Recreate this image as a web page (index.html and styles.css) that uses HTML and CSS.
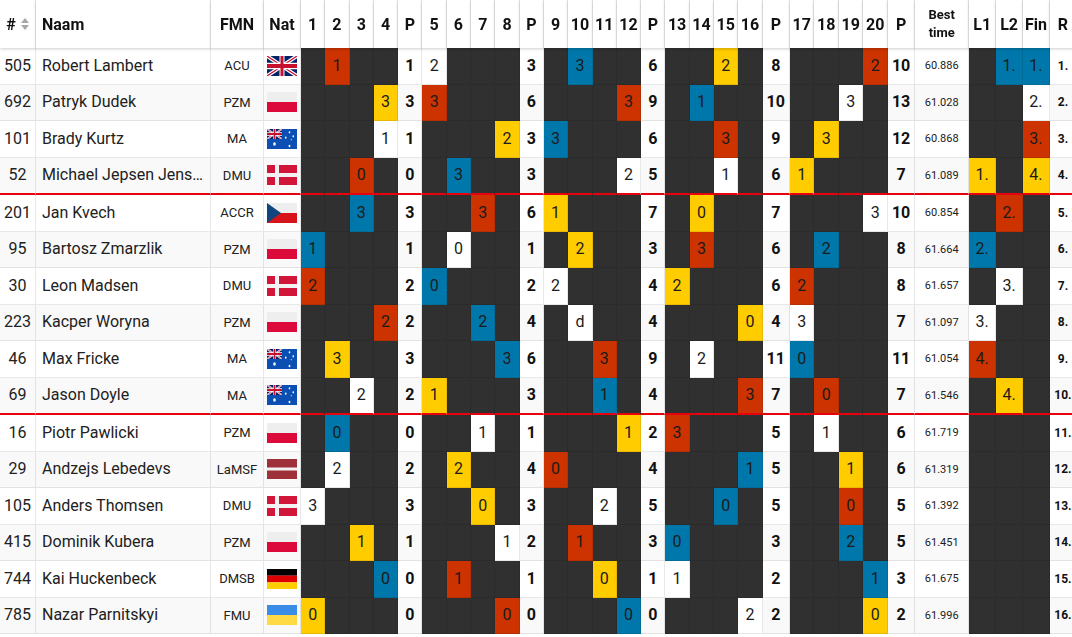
FILE: index.html
```html
<!DOCTYPE html>
<html lang="nl">
<head>
<meta charset="utf-8">
<title>Uitslag</title>
<link rel="stylesheet" href="styles.css">
</head>
<body>
<svg class="defs" aria-hidden="true">
  <symbol id="gb" viewBox="0 0 60 30" preserveAspectRatio="none">
    <rect width="60" height="30" fill="#012169"/>
    <path d="M0,0 L60,30 M60,0 L0,30" stroke="#fff" stroke-width="6"/>
    <path d="M0,0 L60,30 M60,0 L0,30" stroke="#c8102e" stroke-width="2"/>
    <path d="M30,0 V30 M0,15 H60" stroke="#fff" stroke-width="10"/>
    <path d="M30,0 V30 M0,15 H60" stroke="#c8102e" stroke-width="6"/>
  </symbol>
  <symbol id="pl" viewBox="0 0 30 20" preserveAspectRatio="none">
    <rect width="30" height="10" fill="#eeeeee"/>
    <rect y="10" width="30" height="10" fill="#dc0a3a"/>
  </symbol>
  <symbol id="au" viewBox="0 0 60 30" preserveAspectRatio="none">
    <rect width="60" height="30" fill="#0b4fb3"/>
    <use href="#gb" width="30" height="15"/>
    <circle cx="15" cy="22.5" r="2.6" fill="#fff"/>
    <circle cx="45" cy="25.5" r="1.8" fill="#fff"/>
    <circle cx="37.5" cy="13" r="1.6" fill="#fff"/>
    <circle cx="45" cy="5" r="1.6" fill="#fff"/>
    <circle cx="52.5" cy="11" r="1.6" fill="#fff"/>
    <circle cx="48.5" cy="16" r="1" fill="#fff"/>
  </symbol>
  <symbol id="dk" viewBox="0 0 30 20" preserveAspectRatio="none">
    <rect width="30" height="20" fill="#d2163a"/>
    <rect x="8" width="4" height="20" fill="#f2f2f2"/>
    <rect y="8" width="30" height="4" fill="#f2f2f2"/>
  </symbol>
  <symbol id="cz" viewBox="0 0 30 20" preserveAspectRatio="none">
    <rect width="30" height="10" fill="#eeeeee"/>
    <rect y="10" width="30" height="10" fill="#d7141a"/>
    <polygon points="0,0 14,10 0,20" fill="#11457e"/>
  </symbol>
  <symbol id="lv" viewBox="0 0 30 20" preserveAspectRatio="none">
    <rect width="30" height="20" fill="#9e3039"/>
    <rect y="8.5" width="30" height="3" fill="#f2f2f2"/>
  </symbol>
  <symbol id="de" viewBox="0 0 30 20" preserveAspectRatio="none">
    <rect width="30" height="6.7" fill="#000"/>
    <rect y="6.6" width="30" height="6.8" fill="#dd0000"/>
    <rect y="13.3" width="30" height="6.7" fill="#ffce00"/>
  </symbol>
  <symbol id="ua" viewBox="0 0 30 20" preserveAspectRatio="none">
    <rect width="30" height="10" fill="#3a8de6"/>
    <rect y="10" width="30" height="10" fill="#ffda44"/>
  </symbol>
</svg>

<table class="results">
  <colgroup>
    <col class="c-no"><col class="c-name"><col class="c-fmn"><col class="c-nat">
    <col class="c-h"><col class="c-h"><col class="c-h"><col class="c-h"><col class="c-h">
    <col class="c-h"><col class="c-h"><col class="c-h"><col class="c-h"><col class="c-h">
    <col class="c-h"><col class="c-h"><col class="c-h"><col class="c-h"><col class="c-h">
    <col class="c-h"><col class="c-h"><col class="c-h"><col class="c-h">
    <col class="c-pw">
    <col class="c-h2"><col class="c-h2"><col class="c-h2"><col class="c-h2">
    <col class="c-pw">
    <col class="c-best"><col class="c-l"><col class="c-l"><col class="c-l"><col class="c-rk">
  </colgroup>
  <thead>
    <tr>
      <th class="hno"><span class="hno-in">#<svg class="sort" viewBox="0 0 8 12"><polygon points="0,5 4,0 8,5" /><polygon points="0,7 8,7 4,12" /></svg></span></th>
      <th class="hname">Naam</th>
      <th>FMN</th>
      <th>Nat</th>
      <th>1</th><th>2</th><th>3</th><th>4</th><th>P</th>
      <th>5</th><th>6</th><th>7</th><th>8</th><th>P</th>
      <th>9</th><th>10</th><th>11</th><th>12</th><th>P</th>
      <th>13</th><th>14</th><th>15</th><th>16</th><th>P</th>
      <th>17</th><th>18</th><th>19</th><th>20</th><th>P</th>
      <th class="hbest">Best<br>time</th>
      <th>L1</th><th>L2</th><th>Fin</th><th>R</th>
    </tr>
  </thead>
  <tbody>
    <tr>
      <td class="no">505</td><td class="name">Robert Lambert</td><td class="fmn">ACU</td>
      <td class="nat"><svg class="flag" viewBox="0 0 30 20"><use href="#gb" width="30" height="20"/></svg></td>
      <td class="x"></td><td class="r">1</td><td class="x"></td><td class="x"></td><td class="p">1</td>
      <td class="w">2</td><td class="x"></td><td class="x"></td><td class="x"></td><td class="p">3</td>
      <td class="x"></td><td class="b">3</td><td class="x"></td><td class="x"></td><td class="p">6</td>
      <td class="x"></td><td class="x"></td><td class="y">2</td><td class="x"></td><td class="p">8</td>
      <td class="x"></td><td class="x"></td><td class="x"></td><td class="r">2</td><td class="p">10</td>
      <td class="bt">60.886</td><td class="x"></td><td class="b">1.</td><td class="b">1.</td><td class="rk">1.</td>
    </tr>
    <tr>
      <td class="no">692</td><td class="name">Patryk Dudek</td><td class="fmn">PZM</td>
      <td class="nat"><svg class="flag" viewBox="0 0 30 20"><use href="#pl" width="30" height="20"/></svg></td>
      <td class="x"></td><td class="x"></td><td class="x"></td><td class="y">3</td><td class="p">3</td>
      <td class="r">3</td><td class="x"></td><td class="x"></td><td class="x"></td><td class="p">6</td>
      <td class="x"></td><td class="x"></td><td class="x"></td><td class="r">3</td><td class="p">9</td>
      <td class="x"></td><td class="b">1</td><td class="x"></td><td class="x"></td><td class="p">10</td>
      <td class="x"></td><td class="x"></td><td class="w">3</td><td class="x"></td><td class="p">13</td>
      <td class="bt">61.028</td><td class="x"></td><td class="x"></td><td class="w">2.</td><td class="rk">2.</td>
    </tr>
    <tr>
      <td class="no">101</td><td class="name">Brady Kurtz</td><td class="fmn">MA</td>
      <td class="nat"><svg class="flag" viewBox="0 0 30 20"><use href="#au" width="30" height="20"/></svg></td>
      <td class="x"></td><td class="x"></td><td class="x"></td><td class="w">1</td><td class="p">1</td>
      <td class="x"></td><td class="x"></td><td class="x"></td><td class="y">2</td><td class="p">3</td>
      <td class="b">3</td><td class="x"></td><td class="x"></td><td class="x"></td><td class="p">6</td>
      <td class="x"></td><td class="x"></td><td class="r">3</td><td class="x"></td><td class="p">9</td>
      <td class="x"></td><td class="y">3</td><td class="x"></td><td class="x"></td><td class="p">12</td>
      <td class="bt">60.868</td><td class="x"></td><td class="x"></td><td class="r">3.</td><td class="rk">3.</td>
    </tr>
    <tr class="sep">
      <td class="no">52</td><td class="name">Michael Jepsen Jensen</td><td class="fmn">DMU</td>
      <td class="nat"><svg class="flag" viewBox="0 0 30 20"><use href="#dk" width="30" height="20"/></svg></td>
      <td class="x"></td><td class="x"></td><td class="r">0</td><td class="x"></td><td class="p">0</td>
      <td class="x"></td><td class="b">3</td><td class="x"></td><td class="x"></td><td class="p">3</td>
      <td class="x"></td><td class="x"></td><td class="x"></td><td class="w">2</td><td class="p">5</td>
      <td class="x"></td><td class="x"></td><td class="w">1</td><td class="x"></td><td class="p">6</td>
      <td class="y">1</td><td class="x"></td><td class="x"></td><td class="x"></td><td class="p">7</td>
      <td class="bt">61.089</td><td class="y">1.</td><td class="x"></td><td class="y">4.</td><td class="rk">4.</td>
    </tr>
    <tr>
      <td class="no">201</td><td class="name">Jan Kvech</td><td class="fmn">ACCR</td>
      <td class="nat"><svg class="flag" viewBox="0 0 30 20"><use href="#cz" width="30" height="20"/></svg></td>
      <td class="x"></td><td class="x"></td><td class="b">3</td><td class="x"></td><td class="p">3</td>
      <td class="x"></td><td class="x"></td><td class="r">3</td><td class="x"></td><td class="p">6</td>
      <td class="y">1</td><td class="x"></td><td class="x"></td><td class="x"></td><td class="p">7</td>
      <td class="x"></td><td class="y">0</td><td class="x"></td><td class="x"></td><td class="p">7</td>
      <td class="x"></td><td class="x"></td><td class="x"></td><td class="w">3</td><td class="p">10</td>
      <td class="bt">60.854</td><td class="x"></td><td class="r">2.</td><td class="x"></td><td class="rk">5.</td>
    </tr>
    <tr>
      <td class="no">95</td><td class="name">Bartosz Zmarzlik</td><td class="fmn">PZM</td>
      <td class="nat"><svg class="flag" viewBox="0 0 30 20"><use href="#pl" width="30" height="20"/></svg></td>
      <td class="b">1</td><td class="x"></td><td class="x"></td><td class="x"></td><td class="p">1</td>
      <td class="x"></td><td class="w">0</td><td class="x"></td><td class="x"></td><td class="p">1</td>
      <td class="x"></td><td class="y">2</td><td class="x"></td><td class="x"></td><td class="p">3</td>
      <td class="x"></td><td class="r">3</td><td class="x"></td><td class="x"></td><td class="p">6</td>
      <td class="x"></td><td class="b">2</td><td class="x"></td><td class="x"></td><td class="p">8</td>
      <td class="bt">61.664</td><td class="b">2.</td><td class="x"></td><td class="x"></td><td class="rk">6.</td>
    </tr>
    <tr>
      <td class="no">30</td><td class="name">Leon Madsen</td><td class="fmn">DMU</td>
      <td class="nat"><svg class="flag" viewBox="0 0 30 20"><use href="#dk" width="30" height="20"/></svg></td>
      <td class="r">2</td><td class="x"></td><td class="x"></td><td class="x"></td><td class="p">2</td>
      <td class="b">0</td><td class="x"></td><td class="x"></td><td class="x"></td><td class="p">2</td>
      <td class="w">2</td><td class="x"></td><td class="x"></td><td class="x"></td><td class="p">4</td>
      <td class="y">2</td><td class="x"></td><td class="x"></td><td class="x"></td><td class="p">6</td>
      <td class="r">2</td><td class="x"></td><td class="x"></td><td class="x"></td><td class="p">8</td>
      <td class="bt">61.657</td><td class="x"></td><td class="w">3.</td><td class="x"></td><td class="rk">7.</td>
    </tr>
    <tr>
      <td class="no">223</td><td class="name">Kacper Woryna</td><td class="fmn">PZM</td>
      <td class="nat"><svg class="flag" viewBox="0 0 30 20"><use href="#pl" width="30" height="20"/></svg></td>
      <td class="x"></td><td class="x"></td><td class="x"></td><td class="r">2</td><td class="p">2</td>
      <td class="x"></td><td class="x"></td><td class="b">2</td><td class="x"></td><td class="p">4</td>
      <td class="x"></td><td class="w">d</td><td class="x"></td><td class="x"></td><td class="p">4</td>
      <td class="x"></td><td class="x"></td><td class="x"></td><td class="y">0</td><td class="p">4</td>
      <td class="w">3</td><td class="x"></td><td class="x"></td><td class="x"></td><td class="p">7</td>
      <td class="bt">61.097</td><td class="w">3.</td><td class="x"></td><td class="x"></td><td class="rk">8.</td>
    </tr>
    <tr>
      <td class="no">46</td><td class="name">Max Fricke</td><td class="fmn">MA</td>
      <td class="nat"><svg class="flag" viewBox="0 0 30 20"><use href="#au" width="30" height="20"/></svg></td>
      <td class="x"></td><td class="y">3</td><td class="x"></td><td class="x"></td><td class="p">3</td>
      <td class="x"></td><td class="x"></td><td class="x"></td><td class="b">3</td><td class="p">6</td>
      <td class="x"></td><td class="x"></td><td class="r">3</td><td class="x"></td><td class="p">9</td>
      <td class="x"></td><td class="w">2</td><td class="x"></td><td class="x"></td><td class="p">11</td>
      <td class="b">0</td><td class="x"></td><td class="x"></td><td class="x"></td><td class="p">11</td>
      <td class="bt">61.054</td><td class="r">4.</td><td class="x"></td><td class="x"></td><td class="rk">9.</td>
    </tr>
    <tr class="sep">
      <td class="no">69</td><td class="name">Jason Doyle</td><td class="fmn">MA</td>
      <td class="nat"><svg class="flag" viewBox="0 0 30 20"><use href="#au" width="30" height="20"/></svg></td>
      <td class="x"></td><td class="x"></td><td class="w">2</td><td class="x"></td><td class="p">2</td>
      <td class="y">1</td><td class="x"></td><td class="x"></td><td class="x"></td><td class="p">3</td>
      <td class="x"></td><td class="x"></td><td class="b">1</td><td class="x"></td><td class="p">4</td>
      <td class="x"></td><td class="x"></td><td class="x"></td><td class="r">3</td><td class="p">7</td>
      <td class="x"></td><td class="r">0</td><td class="x"></td><td class="x"></td><td class="p">7</td>
      <td class="bt">61.546</td><td class="x"></td><td class="y">4.</td><td class="x"></td><td class="rk">10.</td>
    </tr>
    <tr>
      <td class="no">16</td><td class="name">Piotr Pawlicki</td><td class="fmn">PZM</td>
      <td class="nat"><svg class="flag" viewBox="0 0 30 20"><use href="#pl" width="30" height="20"/></svg></td>
      <td class="x"></td><td class="b">0</td><td class="x"></td><td class="x"></td><td class="p">0</td>
      <td class="x"></td><td class="x"></td><td class="w">1</td><td class="x"></td><td class="p">1</td>
      <td class="x"></td><td class="x"></td><td class="x"></td><td class="y">1</td><td class="p">2</td>
      <td class="r">3</td><td class="x"></td><td class="x"></td><td class="x"></td><td class="p">5</td>
      <td class="x"></td><td class="w">1</td><td class="x"></td><td class="x"></td><td class="p">6</td>
      <td class="bt">61.719</td><td class="x"></td><td class="x"></td><td class="x"></td><td class="rk">11.</td>
    </tr>
    <tr>
      <td class="no">29</td><td class="name">Andzejs Lebedevs</td><td class="fmn">LaMSF</td>
      <td class="nat"><svg class="flag" viewBox="0 0 30 20"><use href="#lv" width="30" height="20"/></svg></td>
      <td class="x"></td><td class="w">2</td><td class="x"></td><td class="x"></td><td class="p">2</td>
      <td class="x"></td><td class="y">2</td><td class="x"></td><td class="x"></td><td class="p">4</td>
      <td class="r">0</td><td class="x"></td><td class="x"></td><td class="x"></td><td class="p">4</td>
      <td class="x"></td><td class="x"></td><td class="x"></td><td class="b">1</td><td class="p">5</td>
      <td class="x"></td><td class="x"></td><td class="y">1</td><td class="x"></td><td class="p">6</td>
      <td class="bt">61.319</td><td class="x"></td><td class="x"></td><td class="x"></td><td class="rk">12.</td>
    </tr>
    <tr>
      <td class="no">105</td><td class="name">Anders Thomsen</td><td class="fmn">DMU</td>
      <td class="nat"><svg class="flag" viewBox="0 0 30 20"><use href="#dk" width="30" height="20"/></svg></td>
      <td class="w">3</td><td class="x"></td><td class="x"></td><td class="x"></td><td class="p">3</td>
      <td class="x"></td><td class="x"></td><td class="y">0</td><td class="x"></td><td class="p">3</td>
      <td class="x"></td><td class="x"></td><td class="w">2</td><td class="x"></td><td class="p">5</td>
      <td class="x"></td><td class="x"></td><td class="b">0</td><td class="x"></td><td class="p">5</td>
      <td class="x"></td><td class="x"></td><td class="r">0</td><td class="x"></td><td class="p">5</td>
      <td class="bt">61.392</td><td class="x"></td><td class="x"></td><td class="x"></td><td class="rk">13.</td>
    </tr>
    <tr>
      <td class="no">415</td><td class="name">Dominik Kubera</td><td class="fmn">PZM</td>
      <td class="nat"><svg class="flag" viewBox="0 0 30 20"><use href="#pl" width="30" height="20"/></svg></td>
      <td class="x"></td><td class="x"></td><td class="y">1</td><td class="x"></td><td class="p">1</td>
      <td class="x"></td><td class="x"></td><td class="x"></td><td class="w">1</td><td class="p">2</td>
      <td class="x"></td><td class="r">1</td><td class="x"></td><td class="x"></td><td class="p">3</td>
      <td class="b">0</td><td class="x"></td><td class="x"></td><td class="x"></td><td class="p">3</td>
      <td class="x"></td><td class="x"></td><td class="b">2</td><td class="x"></td><td class="p">5</td>
      <td class="bt">61.451</td><td class="x"></td><td class="x"></td><td class="x"></td><td class="rk">14.</td>
    </tr>
    <tr>
      <td class="no">744</td><td class="name">Kai Huckenbeck</td><td class="fmn">DMSB</td>
      <td class="nat"><svg class="flag" viewBox="0 0 30 20"><use href="#de" width="30" height="20"/></svg></td>
      <td class="x"></td><td class="x"></td><td class="x"></td><td class="b">0</td><td class="p">0</td>
      <td class="x"></td><td class="r">1</td><td class="x"></td><td class="x"></td><td class="p">1</td>
      <td class="x"></td><td class="x"></td><td class="y">0</td><td class="x"></td><td class="p">1</td>
      <td class="w">1</td><td class="x"></td><td class="x"></td><td class="x"></td><td class="p">2</td>
      <td class="x"></td><td class="x"></td><td class="x"></td><td class="b">1</td><td class="p">3</td>
      <td class="bt">61.675</td><td class="x"></td><td class="x"></td><td class="x"></td><td class="rk">15.</td>
    </tr>
    <tr>
      <td class="no">785</td><td class="name">Nazar Parnitskyi</td><td class="fmn">FMU</td>
      <td class="nat"><svg class="flag" viewBox="0 0 30 20"><use href="#ua" width="30" height="20"/></svg></td>
      <td class="y">0</td><td class="x"></td><td class="x"></td><td class="x"></td><td class="p">0</td>
      <td class="x"></td><td class="x"></td><td class="x"></td><td class="r">0</td><td class="p">0</td>
      <td class="x"></td><td class="x"></td><td class="x"></td><td class="b">0</td><td class="p">0</td>
      <td class="x"></td><td class="x"></td><td class="x"></td><td class="w">2</td><td class="p">2</td>
      <td class="x"></td><td class="x"></td><td class="x"></td><td class="y">0</td><td class="p">2</td>
      <td class="bt">61.996</td><td class="x"></td><td class="x"></td><td class="x"></td><td class="rk">16.</td>
    </tr>
  </tbody>
</table>
</body>
</html>
```

FILE: styles.css
```css
* {
  box-sizing: border-box;
}

html,
body {
  margin: 0;
  padding: 0;
  background: #fff;
  overflow: hidden;
}

body {
  font-family: Roboto, "Liberation Sans", Arial, sans-serif;
  font-size: 16px;
  color: #212121;
}

.defs {
  position: absolute;
  width: 0;
  height: 0;
  overflow: hidden;
}

.results {
  border-collapse: separate;
  border-spacing: 0;
  table-layout: fixed;
  width: 1077px;
}

.c-no { width: 36px; }
.c-name { width: 175px; }
.c-fmn { width: 53px; }
.c-nat { width: 37px; }
.c-h { width: 24.3px; }
.c-h2 { width: 24.5px; }
.c-pw { width: 27.3px; }
.c-best { width: 54px; }
.c-l { width: 26.9px; }
.c-rk { width: 27px; }

.results th,
.results td {
  padding: 0;
  text-align: center;
  vertical-align: middle;
  border-right: 1px solid rgba(0, 0, 0, 0.09);
}

.results th {
  height: 48px;
  font-size: 16px;
  font-weight: 700;
  color: #111;
  background: #fff;
  position: sticky;
  top: 0;
  z-index: 1;
  box-shadow: 0 1px 3px rgba(0, 0, 0, 0.2);
  white-space: nowrap;
}

.results th.hname {
  text-align: left;
  padding-left: 6px;
}

.hno-in {
  display: inline-flex;
  align-items: center;
  gap: 5px;
}

.sort {
  width: 8px;
  height: 12px;
  fill: #a8a8a8;
}

.results th.hbest {
  font-size: 13px;
  line-height: 18px;
}

.results td {
  height: 36.5px;
  border-bottom: 1px solid rgba(0, 0, 0, 0.09);
  line-height: 1;
}

.results tr.sep td {
  height: 37.5px;
  border-bottom: 2px solid #e8000a;
}

.results tbody tr:nth-child(even) {
  background: #f9f9f9;
}

.results td.name {
  text-align: left;
  padding: 0 2px 0 6px;
  white-space: nowrap;
  overflow: hidden;
  text-overflow: ellipsis;
}

.results td.fmn {
  font-size: 13px;
}

.flag {
  display: block;
  width: 30px;
  height: 20px;
  margin: 0 auto;
}

.results td.x { background: #303030; }
.results td.r { background: #cc3300; color: #1b1b1b; }
.results td.b { background: #0077aa; color: #1b1b1b; }
.results td.y { background: #ffcc00; color: #1b1b1b; }
.results td.w { background: #fff; color: #1b1b1b; }

.results td.p {
  font-weight: 700;
  color: #111;
}

.results td.bt {
  font-size: 11px;
}

.results td.rk {
  font-size: 12px;
  font-weight: 700;
  color: #111;
}
```
